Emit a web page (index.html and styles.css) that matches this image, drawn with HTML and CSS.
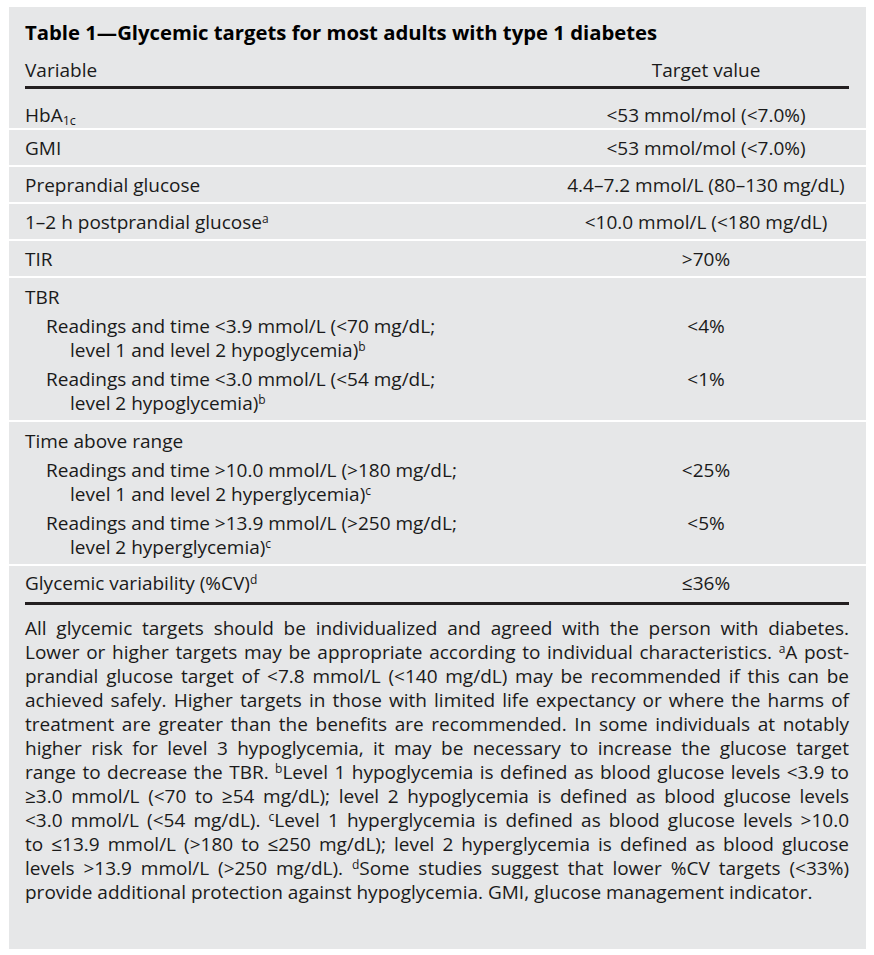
FILE: index.html
```html
<!DOCTYPE html>
<html lang="en">
<head>
<meta charset="utf-8">
<title>Table 1 — Glycemic targets</title>
<link rel="stylesheet" href="styles.css">
</head>
<body>
<div class="card">
  <section class="block">
    <h1 class="title">Table 1—Glycemic targets for most adults with type 1 diabetes</h1>
    <div class="grid colhead"><div class="var">Variable</div><div class="val">Target value</div></div>
    <div class="grid first"><div class="var">HbA<sub>1c</sub></div><div class="val">&lt;53 mmol/mol (&lt;7.0%)</div></div>
  </section>
  <section class="block grid single"><div class="var">GMI</div><div class="val">&lt;53 mmol/mol (&lt;7.0%)</div></section>
  <section class="block grid single"><div class="var">Preprandial glucose</div><div class="val">4.4–7.2 mmol/L (80–130 mg/dL)</div></section>
  <section class="block grid single"><div class="var">1–2 h postprandial glucose<sup>a</sup></div><div class="val">&lt;10.0 mmol/L (&lt;180 mg/dL)</div></section>
  <section class="block grid single"><div class="var">TIR</div><div class="val">&gt;70%</div></section>
  <section class="block group">
    <div class="var">TBR</div>
    <div class="grid sub"><div class="var">Readings and time &lt;3.9 mmol/L (&lt;70 mg/dL;<br>level 1 and level 2 hypoglycemia)<sup>b</sup></div><div class="val">&lt;4%</div></div>
    <div class="grid sub"><div class="var">Readings and time &lt;3.0 mmol/L (&lt;54 mg/dL;<br>level 2 hypoglycemia)<sup>b</sup></div><div class="val">&lt;1%</div></div>
  </section>
  <section class="block group">
    <div class="var">Time above range</div>
    <div class="grid sub"><div class="var">Readings and time &gt;10.0 mmol/L (&gt;180 mg/dL;<br>level 1 and level 2 hyperglycemia)<sup>c</sup></div><div class="val">&lt;25%</div></div>
    <div class="grid sub"><div class="var">Readings and time &gt;13.9 mmol/L (&gt;250 mg/dL;<br>level 2 hyperglycemia)<sup>c</sup></div><div class="val">&lt;5%</div></div>
  </section>
  <section class="block">
    <div class="grid lastrow"><div class="var">Glycemic variability (%CV)<sup>d</sup></div><div class="val">≤36%</div></div>
    <p class="notes">
      <span class="ln">All glycemic targets should be individualized and agreed with the person with diabetes.</span>
      <span class="ln">Lower or higher targets may be appropriate according to individual characteristics. <sup>a</sup>A post-</span>
      <span class="ln">prandial glucose target of &lt;7.8 mmol/L (&lt;140 mg/dL) may be recommended if this can be</span>
      <span class="ln">achieved safely. Higher targets in those with limited life expectancy or where the harms of</span>
      <span class="ln">treatment are greater than the benefits are recommended. In some individuals at notably</span>
      <span class="ln">higher risk for level 3 hypoglycemia, it may be necessary to increase the glucose target</span>
      <span class="ln">range to decrease the TBR. <sup>b</sup>Level 1 hypoglycemia is defined as blood glucose levels &lt;3.9 to</span>
      <span class="ln">≥3.0 mmol/L (&lt;70 to ≥54 mg/dL); level 2 hypoglycemia is defined as blood glucose levels</span>
      <span class="ln">&lt;3.0 mmol/L (&lt;54 mg/dL). <sup>c</sup>Level 1 hyperglycemia is defined as blood glucose levels &gt;10.0</span>
      <span class="ln">to ≤13.9 mmol/L (&gt;180 to ≤250 mg/dL); level 2 hyperglycemia is defined as blood glucose</span>
      <span class="ln">levels &gt;13.9 mmol/L (&gt;250 mg/dL). <sup>d</sup>Some studies suggest that lower %CV targets (&lt;33%)</span>
      <span class="ln end">provide additional protection against hypoglycemia. GMI, glucose management indicator.</span>
    </p>
  </section>
</div>
</body>
</html>
```

FILE: styles.css
```css
* { box-sizing: border-box; }

body {
  margin: 0;
  background: #ffffff;
  font-family: "Open Sans", "Noto Sans", sans-serif;
  font-size: 19px;
  line-height: 24px;
  color: #1a1a1a;
}

.card {
  margin: 7px 0 0 9px;
  width: 857px;
  display: flex;
  flex-direction: column;
  gap: 2px;
}

.block {
  background: #e6e7e8;
  padding: 0 17px 0 16px;
}

.title {
  margin: 0;
  padding-top: 13px;
  font-size: 20.3px;
  font-weight: 700;
  line-height: 24px;
  color: #000;
}

.grid {
  display: grid;
  grid-template-columns: 1fr 286px;
}

.val {
  text-align: center;
  white-space: nowrap;
}

.colhead {
  margin-top: 14px;
  padding-bottom: 4px;
  border-bottom: 3px solid #231f20;
}

.first {
  padding-top: 14px;
  padding-bottom: 1px;
}

.single {
  padding-top: 6px;
  padding-bottom: 5px;
}

.group {
  padding-top: 7px;
  padding-bottom: 5px;
}

.sub {
  margin-top: 5px;
}

.sub .var {
  padding-left: 45px;
  text-indent: -24px;
  white-space: nowrap;
}

.lastrow {
  padding-top: 5px;
  padding-bottom: 7px;
  border-bottom: 3px solid #231f20;
}

.notes {
  margin: 11px 0 0;
  padding-bottom: 45px;
}

.ln {
  display: block;
  text-align: justify;
  text-align-last: justify;
}

.ln.end {
  text-align-last: left;
}

sup {
  font-size: 12px;
  line-height: 0;
  vertical-align: 6px;
}

sub {
  font-size: 12.5px;
  line-height: 0;
  vertical-align: -3px;
}
```
